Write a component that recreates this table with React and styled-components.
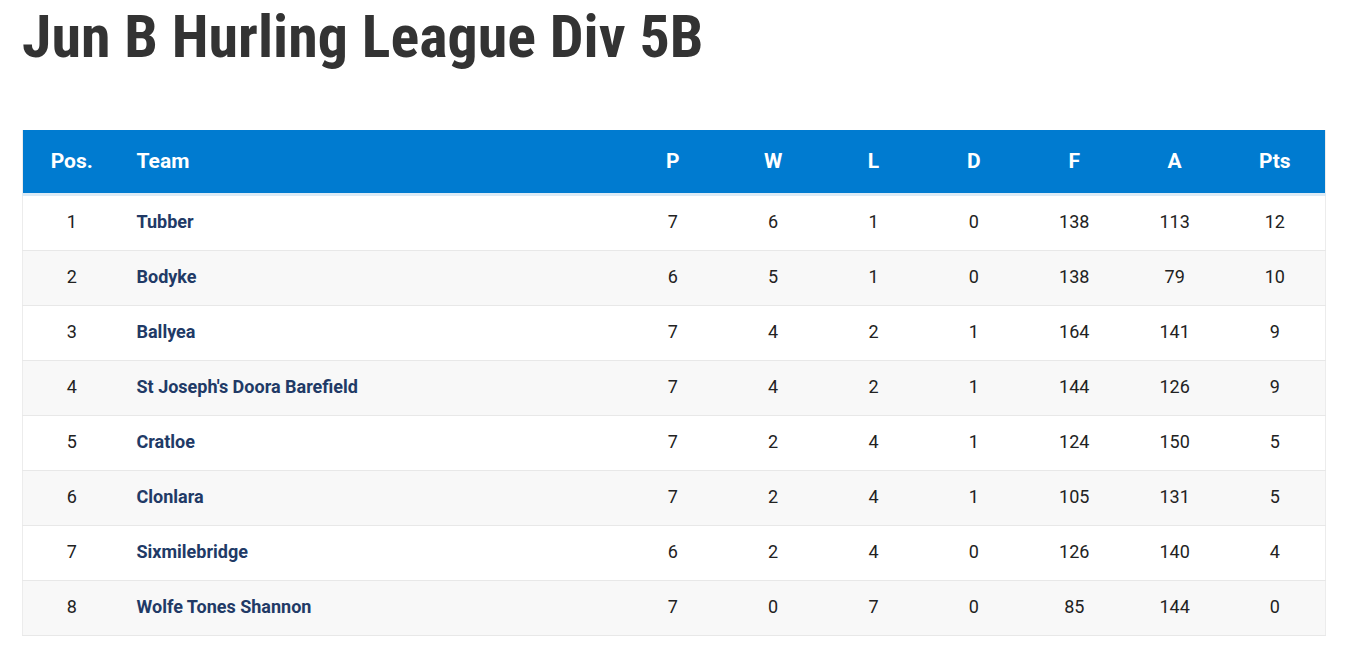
import React from 'react'
import styled, { createGlobalStyle } from 'styled-components'

const GlobalStyle = createGlobalStyle`
    body {
        margin: 0;
        background: #fff;
        font-family: Roboto, 'Liberation Sans', sans-serif;
    }
`

const Page = styled.div`
    padding: 0 20px 0 22px;
`

const Title = styled.h1`
    margin: 0;
    padding-top: 3px;
    height: 130px;
    font-family: Roboto, sans-serif;
    font-weight: 700;
    font-size: 60px;
    line-height: 68px;
    color: #333;
    font-stretch: condensed;
    white-space: nowrap;
    box-sizing: border-box;
`

const Table = styled.table`
    width: 1303px;
    border-collapse: collapse;
    table-layout: fixed;
    border-left: 1px solid #ececec;
    border-right: 1px solid #ececec;
`

const HeadRow = styled.tr`
    background: #007bd0;
    border-bottom: 3px solid #dceaf5;
`

const Th = styled.th`
    height: 61px;
    padding: 0 0 2px;
    color: #fff;
    font-size: 21px;
    font-weight: 700;
    text-align: ${(p) => (p.left ? 'left' : 'center')};
    padding-left: ${(p) => (p.left ? '16px' : '0')};
`

const Row = styled.tr`
    background: ${(p) => (p.alt ? '#f8f8f8' : '#fff')};
    border-bottom: 1px solid #e8e8e8;
`

const Td = styled.td`
    height: 50px;
    padding: 0 0 4px;
    font-size: 18px;
    color: #222;
    text-align: center;
`

const TeamCell = styled.td`
    height: 50px;
    padding: 0 0 4px 16px;
    font-size: 18px;
    font-weight: 700;
    color: #213a66;
`

const teams = [
    ['Tubber', 7, 6, 1, 0, 138, 113, 12],
    ['Bodyke', 6, 5, 1, 0, 138, 79, 10],
    ['Ballyea', 7, 4, 2, 1, 164, 141, 9],
    ["St Joseph's Doora Barefield", 7, 4, 2, 1, 144, 126, 9],
    ['Cratloe', 7, 2, 4, 1, 124, 150, 5],
    ['Clonlara', 7, 2, 4, 1, 105, 131, 5],
    ['Sixmilebridge', 6, 2, 4, 0, 126, 140, 4],
    ['Wolfe Tones Shannon', 7, 0, 7, 0, 85, 144, 0],
]

const cols = ['P', 'W', 'L', 'D', 'F', 'A', 'Pts']

const App = () => {
    return (
        <Page>
            <GlobalStyle />
            <Title>Jun B Hurling League Div 5B</Title>
            <Table>
                <colgroup>
                    <col style={{ width: 98 }} />
                    <col style={{ width: 502 }} />
                    {cols.map((c) => (
                        <col key={c} style={{ width: 100.4 }} />
                    ))}
                </colgroup>
                <thead>
                    <HeadRow>
                        <Th>Pos.</Th>
                        <Th left>Team</Th>
                        {cols.map((c) => (
                            <Th key={c}>{c}</Th>
                        ))}
                    </HeadRow>
                </thead>
                <tbody>
                    {teams.map(([name, ...stats], i) => (
                        <Row key={name} alt={i % 2 === 1}>
                            <Td>{i + 1}</Td>
                            <TeamCell>{name}</TeamCell>
                            {stats.map((s, j) => (
                                <Td key={j}>{s}</Td>
                            ))}
                        </Row>
                    ))}
                </tbody>
            </Table>
        </Page>
    )
}

export default App
